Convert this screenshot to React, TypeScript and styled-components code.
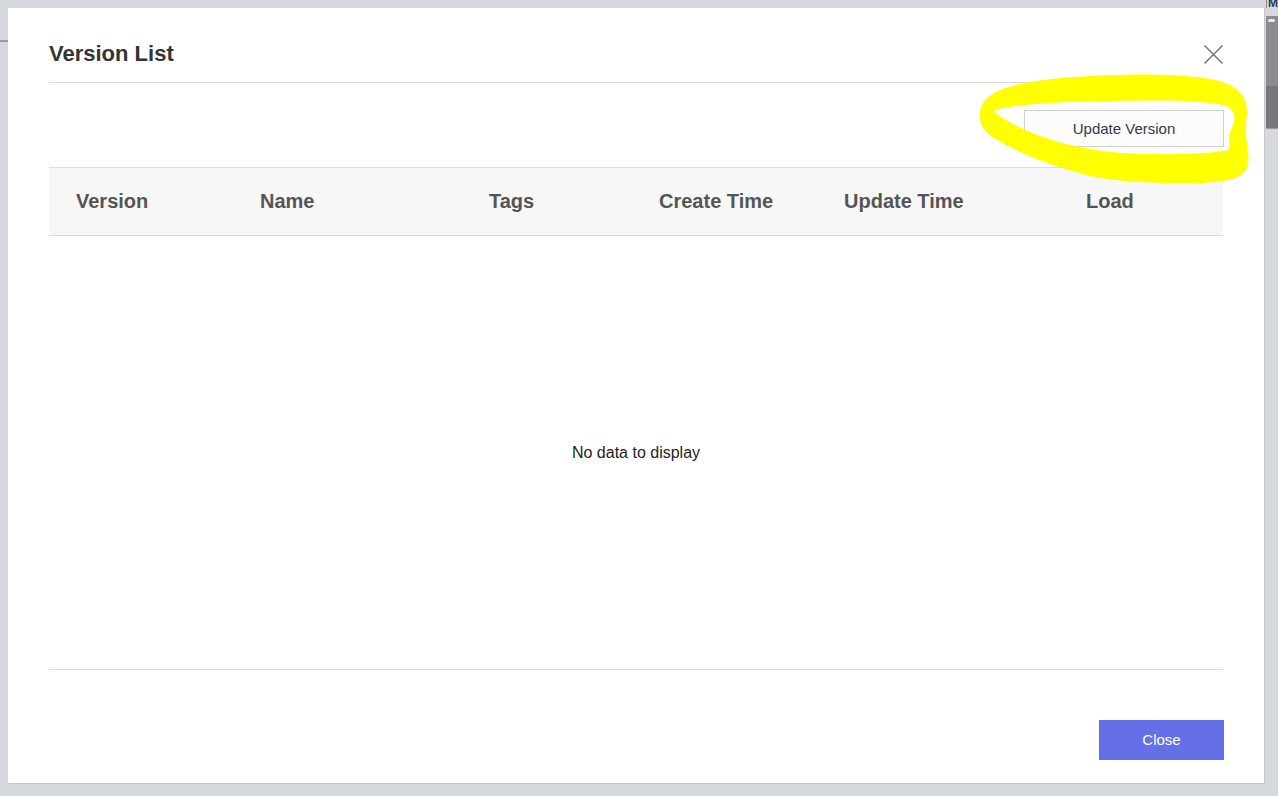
import React from "react";
import styled, { createGlobalStyle } from "styled-components";

const Global = createGlobalStyle`
  html, body { margin: 0; padding: 0; }
  body {
    background: #d5d8dc;
    font-family: "Liberation Sans", Arial, sans-serif;
    width: 1278px;
    height: 796px;
    overflow: hidden;
  }
`;

const Page = styled.div`
  display: flex;
  align-items: flex-start;
  width: 1278px;
  height: 796px;
  position: relative;
`;

const LeftGutter = styled.div`
  width: 8px;
  flex: none;
  padding-top: 40px;
`;

const GutterLine = styled.div`
  height: 2px;
  background: #9a9b9d;
`;

const RightGutter = styled.div`
  margin-left: 2px;
  width: 12px;
  flex: none;
  display: flex;
  flex-direction: column;
`;

const PeekText = styled.div`
  height: 10px;
  font-size: 12px;
  line-height: 10px;
  font-weight: bold;
  color: #2b3a55;
  overflow: hidden;
  border-left: 1px solid #888;
  padding-left: 1px;
  white-space: nowrap;
  margin-top: -2px;
`;

const ScrollTrack = styled.div`
  margin-top: 8px;
  height: 70px;
  background: #8c8c90;
  position: relative;
`;

const ScrollThumb = styled.div`
  height: 42px;
  background: #78787c;
  border-bottom: 1px solid #9a9a9e;
`;

const Tick = styled.div`
  position: absolute;
  left: 2px;
  top: 3px;
  width: 7px;
  height: 3px;
  border-radius: 2px;
  background: #e8e8e8;
`;

const Modal = styled.div`
  margin-top: 8px;
  width: 1256px;
  height: 775px;
  background: #fff;
  box-shadow: 1px 1px 0 #c4c6c9;
  padding: 0 41px;
  box-sizing: border-box;
  display: flex;
  flex-direction: column;
`;

const Header = styled.div`
  height: 75px;
  padding-top: 32px;
  box-sizing: border-box;
  display: flex;
  align-items: flex-start;
  justify-content: space-between;
  border-bottom: 1px solid #dadada;
`;

const Title = styled.h2`
  margin: 0;
  font-size: 22px;
  line-height: 28px;
  font-weight: bold;
  color: #333;
`;

const CloseIcon = styled.button`
  border: none;
  background: none;
  padding: 0;
  width: 22px;
  height: 22px;
  margin-top: 3px;
  margin-right: -1px;
  display: flex;
  align-items: center;
  justify-content: center;
  cursor: pointer;
`;

const Toolbar = styled.div`
  display: flex;
  justify-content: flex-end;
  padding-top: 27px;
  padding-bottom: 20px;
  margin-right: -1px;
`;

const OutlineButton = styled.button`
  width: 200px;
  height: 37px;
  border: 1px solid #cfcfcf;
  background: #fcfcfc;
  color: #33384a;
  font-family: "Liberation Sans", Arial, sans-serif;
  font-size: 15px;
  padding: 0;
`;

const Table = styled.div`
  flex: 1;
  display: flex;
  flex-direction: column;
  border-bottom: 1px solid #dadada;
`;

const HeadRow = styled.div`
  display: grid;
  grid-template-columns: 184px 229px 170px 185px 242px 163px;
  height: 67px;
  background: #f7f7f7;
  border-top: 1px solid #dcdcdc;
  border-bottom: 1px solid #dcdcdc;
`;

const HeadCell = styled.div`
  display: flex;
  align-items: center;
  padding-left: 27px;
  font-size: 20px;
  font-weight: bold;
  color: #555;
  white-space: nowrap;
`;

const Empty = styled.div`
  flex: 1;
  display: flex;
  align-items: center;
  justify-content: center;
  font-size: 16px;
  color: #222;
`;

const Footer = styled.div`
  height: 113px;
  display: flex;
  justify-content: flex-end;
  align-items: flex-end;
  padding-bottom: 23px;
  box-sizing: border-box;
  margin-right: -1px;
`;

const PrimaryButton = styled.button`
  width: 125px;
  height: 40px;
  border: none;
  background: #6570e8;
  color: #fff;
  font-family: "Liberation Sans", Arial, sans-serif;
  font-size: 15px;
  line-height: 39px;
  padding: 0 0 1px;
`;

const Highlight = styled.svg`
  position: absolute;
  left: 0;
  top: 0;
  pointer-events: none;
`;

const columns = ["Version", "Name", "Tags", "Create Time", "Update Time", "Load"];

export default function App() {
  return (
    <>
      <Global />
      <Page>
        <LeftGutter>
          <GutterLine />
        </LeftGutter>
        <Modal>
          <Header>
            <Title>Version List</Title>
            <CloseIcon aria-label="close">
              <svg width="21" height="21" viewBox="0 0 21 21">
                <path d="M1.5 1.5 L19.5 19.5 M19.5 1.5 L1.5 19.5" stroke="#7a7a7a" strokeWidth="1.6" fill="none" />
              </svg>
            </CloseIcon>
          </Header>
          <Toolbar>
            <OutlineButton>Update Version</OutlineButton>
          </Toolbar>
          <Table>
            <HeadRow>
              {columns.map((c) => (
                <HeadCell key={c}>{c}</HeadCell>
              ))}
            </HeadRow>
            <Empty>No data to display</Empty>
          </Table>
          <Footer>
            <PrimaryButton>Close</PrimaryButton>
          </Footer>
        </Modal>
        <RightGutter>
          <PeekText>MI</PeekText>
          <ScrollTrack>
            <Tick />
            <ScrollThumb style={{ marginTop: 70 }} />
          </ScrollTrack>
        </RightGutter>
        <Highlight width="1278" height="796" viewBox="0 0 1278 796">
          <path
            fillRule="evenodd"
            fill="#ffff00"
            d="M980 112 C 982 92, 1010 80, 1090 76 C 1150 73, 1210 74, 1232 86 C 1246 94, 1249 108, 1246 122 C 1244 136, 1250 150, 1248 164 C 1246 178, 1228 182, 1200 183 C 1160 184, 1120 182, 1090 176 C 1050 166, 1010 150, 988 134 C 980 126, 979 118, 980 112 Z
               M993 111 C 1010 104, 1060 102, 1110 101 C 1160 100, 1205 100, 1226 106 C 1236 110, 1236 120, 1232 128 C 1226 136, 1232 146, 1228 150 C 1210 154, 1160 156, 1110 152 C 1060 146, 1020 132, 993 111 Z"
          />
        </Highlight>
      </Page>
    </>
  );
}
